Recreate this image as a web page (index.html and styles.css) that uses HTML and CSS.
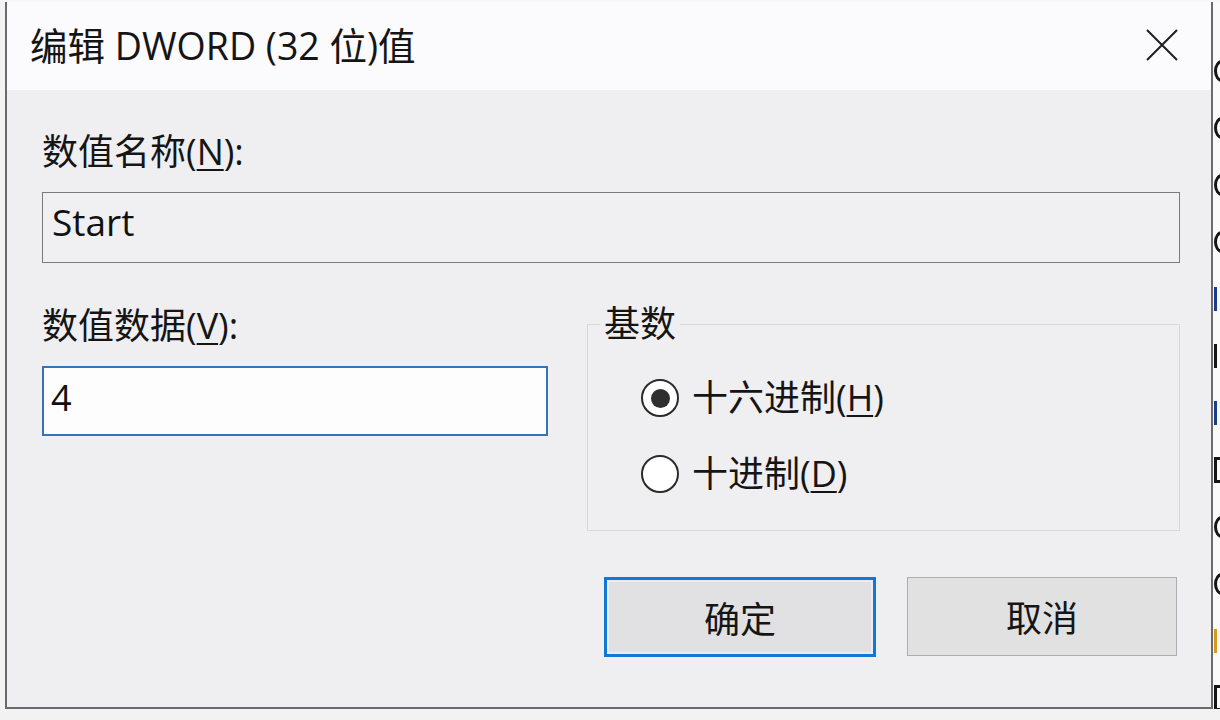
FILE: index.html
```html
<!DOCTYPE html>
<html lang="zh-CN">
<head>
<meta charset="utf-8">
<title>编辑 DWORD (32 位)值</title>
<link rel="stylesheet" href="styles.css">
</head>
<body>
<div class="screen">
  <div class="main-row">
    <div class="left-strip"></div>
    <div class="dialog">
      <div class="titlebar">
        <span class="title">编辑 DWORD (32 位)值</span>
        <svg class="close" width="32" height="32" viewBox="0 0 32 32">
          <path d="M1 1 L31 31 M31 1 L1 31" stroke="#1e1e1e" stroke-width="2" fill="none"/>
        </svg>
      </div>
      <div class="content">
        <div class="label">数值名称(<u>N</u>):</div>
        <div class="field readonly">Start</div>
        <div class="row2">
          <div class="data-col">
            <div class="label">数值数据(<u>V</u>):</div>
            <div class="field edit">4</div>
          </div>
          <fieldset class="group">
            <legend>基数</legend>
            <div class="radio-row">
              <span class="radio checked"></span>
              <span class="radio-text">十六进制(<u>H</u>)</span>
            </div>
            <div class="radio-row">
              <span class="radio"></span>
              <span class="radio-text">十进制(<u>D</u>)</span>
            </div>
          </fieldset>
        </div>
        <div class="buttons">
          <div class="btn default">确定</div>
          <div class="btn">取消</div>
        </div>
      </div>
    </div>
    <div class="right-strip">
      <div class="frag"><i class="arc"></i></div>
      <div class="frag"><i class="arc"></i></div>
      <div class="frag"><i class="arc"></i></div>
      <div class="frag"><i class="arc"></i></div>
      <div class="frag"><i class="bar blue"></i></div>
      <div class="frag"><i class="bar"></i></div>
      <div class="frag"><i class="bar blue"></i></div>
      <div class="frag"><i class="brk"></i></div>
      <div class="frag"><i class="arc"></i></div>
      <div class="frag"><i class="arc"></i></div>
      <div class="frag"><i class="bar orange"></i></div>
      <div class="frag"><i class="brk"></i></div>
    </div>
  </div>
  <div class="bottom-strip"></div>
</div>
</body>
</html>
```
FILE: styles.css
```css
* { box-sizing: border-box; }
html, body { margin: 0; padding: 0; }
body {
  width: 1220px;
  height: 720px;
  overflow: hidden;
  background: #f6f6f6;
  font-family: "Open Sans", "Noto Sans CJK SC", sans-serif;
  color: #111;
}
.screen {
  width: 1220px;
  height: 720px;
  display: flex;
  flex-direction: column;
  padding-top: 2px;
  overflow: hidden;
}
.main-row {
  display: flex;
  height: 707px;
}
.left-strip {
  width: 5px;
  background: #f3f3f3;
}
.dialog {
  width: 1208px;
  display: flex;
  flex-direction: column;
  border: 2px solid #6a6a6a;
  border-top: none;
  background: #efeef0;
}
.titlebar {
  height: 88px;
  background: #fbfafc;
  display: flex;
  align-items: center;
  justify-content: space-between;
  padding: 0 33px 0 23px;
}
.title {
  font-size: 37.5px;
  line-height: 40px;
  color: #151515;
}
.close { display: block; margin-top: -2px; }
.content {
  padding: 42px 31px 0 35px;
  display: flex;
  flex-direction: column;
}
.label {
  font-size: 36px;
  line-height: 40px;
  color: #151515;
}
u { text-decoration-thickness: 2px; text-underline-offset: 4px; }
.field {
  font-size: 36px;
  line-height: 40px;
  display: flex;
  align-items: center;
  padding: 0 0 6px 9px;
}
.field.readonly {
  margin-top: 20px;
  height: 71px;
  border: 1px solid #7a7a7a;
  background: #f0eff1;
  font-size: 37px;
  padding-bottom: 12px;
}
.row2 {
  margin-top: 43px;
  display: flex;
  gap: 39px;
}
.data-col {
  width: 506px;
  display: flex;
  flex-direction: column;
}
.field.edit {
  margin-top: 20px;
  height: 70px;
  border: 2px solid #3574b7;
  background: #fdfdfe;
  padding-left: 7px;
}
.group {
  flex: 1;
  margin: -2px 0 0 0;
  padding: 34px 0 36px 0;
  border: 1px solid #d8d8da;
  min-width: 0;
}
.group legend {
  font-size: 36px;
  line-height: 40px;
  padding: 0 4px;
  margin-left: 12px;
  color: #151515;
}
.radio-row {
  display: flex;
  align-items: center;
  height: 40px;
  gap: 13px;
  padding-left: 53px;
}
.radio-row + .radio-row { margin-top: 36px; }
.radio {
  width: 38px;
  height: 38px;
  border-radius: 50%;
  border: 2px solid #2a2a2a;
  background: #fff;
  display: flex;
  align-items: center;
  justify-content: center;
}
.radio.checked::after {
  content: "";
  width: 19px;
  height: 19px;
  border-radius: 50%;
  background: #2f2f2f;
}
.radio-text {
  font-size: 36px;
  line-height: 40px;
  color: #151515;
}
.buttons {
  margin-top: 46px;
  display: flex;
  justify-content: flex-end;
  gap: 31px;
  padding-right: 3px;
}
.btn {
  width: 270px;
  height: 79px;
  border: 1px solid #adadad;
  background: #e1e1e1;
  display: flex;
  align-items: center;
  justify-content: center;
  font-size: 36px;
  color: #151515;
}
.btn.default {
  width: 272px;
  height: 80px;
  border: 3px solid #1177d8;
  box-shadow: inset 0 0 0 2px #ececec;
  background: #e1e0e2;
}
.right-strip {
  width: 7px;
  background: #fafafa;
  overflow: hidden;
  display: flex;
  flex-direction: column;
  padding-top: 40px;
}
.frag {
  height: 57px;
  flex: none;
  display: flex;
  align-items: center;
}
.arc {
  display: block;
  flex: none;
  width: 16px;
  height: 22px;
  border: 3px solid #151515;
  border-radius: 50%;
  margin-left: 1px;
}
.bar {
  display: block;
  flex: none;
  width: 3px;
  height: 24px;
  background: #151515;
  margin-left: 1px;
}
.brk {
  display: block;
  flex: none;
  width: 10px;
  height: 26px;
  border: 3px solid #151515;
  border-right: none;
  margin-left: 1px;
}
.bar.blue { background: #1c3d8e; }
.bar.orange { background: #d69a1e; }
.bottom-strip {
  height: 11px;
  background: #f2f2f2;
}
```
